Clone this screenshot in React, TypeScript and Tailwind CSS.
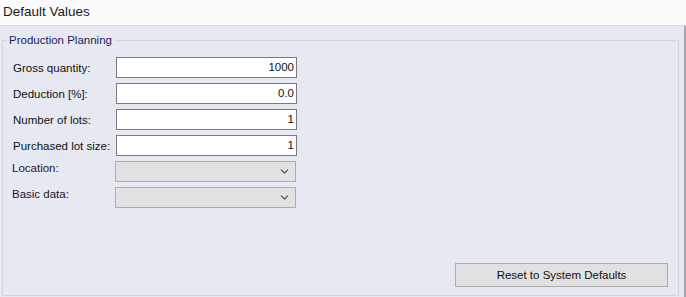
import { ChevronDown } from 'lucide-react';

const textRows = [
  { label: 'Gross quantity:', value: '1000' },
  { label: 'Deduction [%]:', value: '0.0' },
  { label: 'Number of lots:', value: '1' },
  { label: 'Purchased lot size:', value: '1' },
];

const comboRows = ['Location:', 'Basic data:'];

export default function App() {
  return (
    <div className="w-[686px] h-[297px] flex flex-col bg-[#e6e9f1] text-[11.5px] text-[#111] font-['Liberation_Sans',Arial,sans-serif]">
      <div className="h-[26px] shrink-0 bg-[#fbfbfc] border-b border-[#d8dbe1] px-[3px] pt-[4px] text-[13.5px] leading-[16px] text-[#1a1a1a]">
        Default Values
      </div>

      <div className="flex-1 flex border-r-2 border-[#a3a5a9] pt-[7px] pl-[2px] pr-[5px] pb-[1px]">
        <fieldset className="flex-1 flex flex-col border border-[#d2d5db] pl-[10px] pr-[10px] pb-[8px]">
          <legend className="-ml-[6px] px-[2px] leading-[14px] text-[#1c2453]">Production Planning</legend>

          <div className="mt-[10px] flex flex-col gap-[5px]">
            {textRows.map((r) => (
              <div key={r.label} className="flex items-center h-[21px]">
                <span className="w-[103px] leading-[14px]">{r.label}</span>
                <div className="w-[181px] h-[21px] bg-white border border-[#7a7a7a] text-right pr-[2px] leading-[19px]">
                  {r.value}
                </div>
              </div>
            ))}
            {comboRows.map((l) => (
              <div key={l} className="flex items-start h-[21px]">
                <span className="w-[103px] -ml-[1px] pr-[1px] leading-[14px] text-[#1d1430]">{l}</span>
                <div className="w-[181px] h-[21px] bg-[#e2e2e2] border border-[#adadad] flex items-center justify-end pr-[4px]">
                  <ChevronDown size={13} strokeWidth={2} className="text-[#4a4a4a]" />
                </div>
              </div>
            ))}
          </div>

          <div className="mt-auto flex justify-end">
            <button className="w-[213px] h-[24px] bg-[#e1e1e1] border border-[#adadad] leading-[22px] text-[#111]">
              Reset to System Defaults
            </button>
          </div>
        </fieldset>
      </div>
    </div>
  );
}
